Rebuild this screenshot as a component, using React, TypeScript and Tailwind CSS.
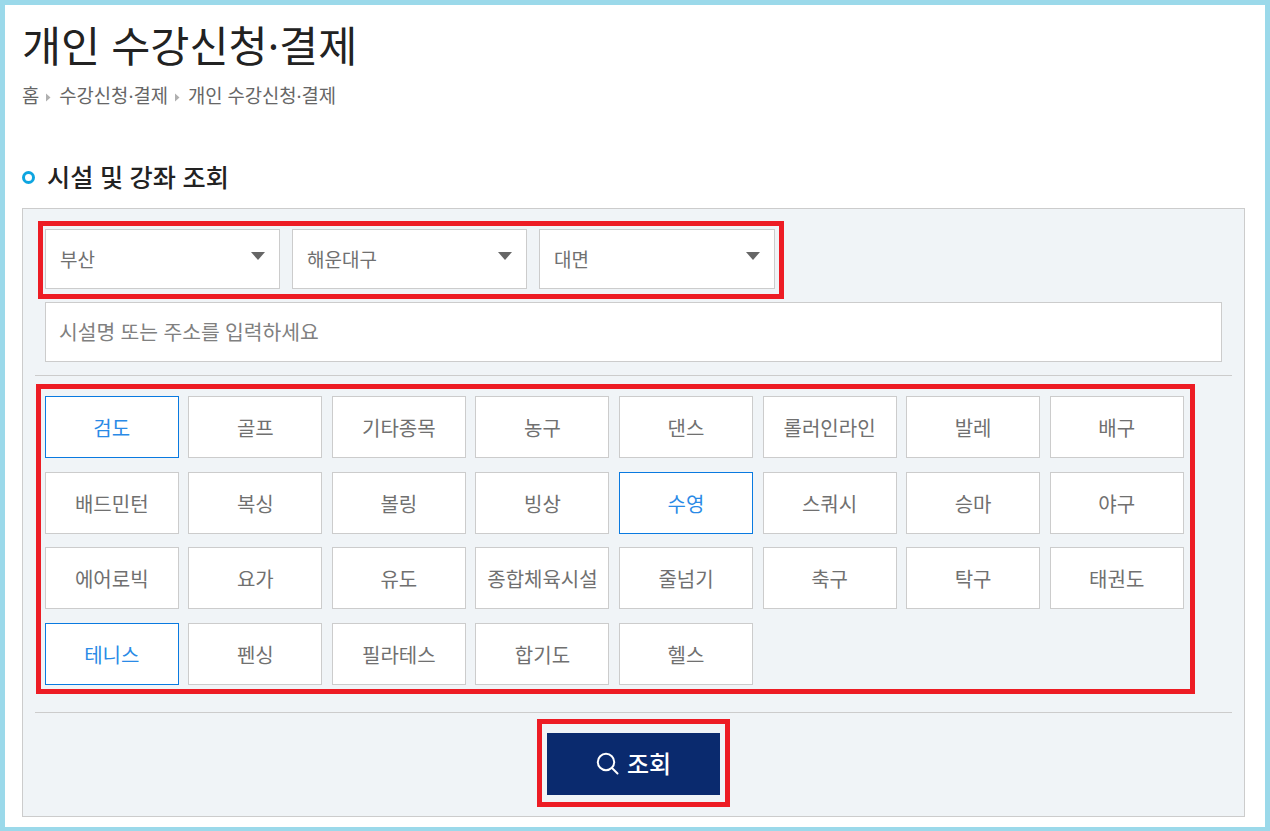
const SPORTS = [
  "검도", "골프", "기타종목", "농구", "댄스", "롤러인라인", "발레", "배구",
  "배드민턴", "복싱", "볼링", "빙상", "수영", "스쿼시", "승마", "야구",
  "에어로빅", "요가", "유도", "종합체육시설", "줄넘기", "축구", "탁구", "태권도",
  "테니스", "펜싱", "필라테스", "합기도", "헬스",
];
const ACTIVE = ["검도", "수영", "테니스"];

function Caret() {
  return (
    <svg width="6" height="9" viewBox="0 0 6 9" className="mt-[2px] mr-[8px] ml-[6px] shrink-0">
      <path d="M1 0.5L5.5 4.5L1 8.5z" fill="#b0b0b0" />
    </svg>
  );
}

function SelectBox({ label, width }: { label: string; width: string }) {
  return (
    <div className={`flex h-[60px] items-center justify-between border border-[#ccc] bg-white pl-[14px] pr-[14px] text-[19px] text-[#707070] ${width}`}>
      <span className="pt-[2px]">{label}</span>
      <svg width="14" height="8" viewBox="0 0 14 8" className="mb-[6px]">
        <path d="M0 0H14L7 8z" fill="#666" />
      </svg>
    </div>
  );
}

export default function App() {
  return (
    <div className="h-[831px] overflow-hidden border-x-[5px] border-t-[5px] border-b-4 border-[#9bd9ea] bg-white pl-[17px] pr-5 font-['Noto_Sans','Noto_Sans_CJK_KR',sans-serif]">
      <h1 className="mt-[11px] h-[60px] text-[42.5px] leading-[60px] font-normal text-[#222]">개인 수강신청·결제</h1>
      <nav className="mt-[8px] flex h-[24px] items-center text-[18.8px] leading-[24px] text-[#666]">
        <span>홈</span>
        <Caret />
        <span>수강신청·결제</span>
        <Caret />
        <span>개인 수강신청·결제</span>
      </nav>

      <h2 className="mt-[53px] flex h-[32px] items-center text-[25.2px] leading-[32px] font-medium text-[#222]">
        <span className="mr-[12px] h-[13px] w-[13px] rounded-full border-[3px] border-[#0ea5e0]" />
        시설 및 강좌 조회
      </h2>

      <section className="mt-[15px] h-[609px] border border-[#ccc] bg-[#f0f4f7] px-3 pt-5">
        <div className="relative ml-[10px] flex w-fit gap-3">
          <SelectBox label="부산" width="w-[235px]" />
          <SelectBox label="해운대구" width="w-[235px]" />
          <SelectBox label="대면" width="w-[236px]" />
          <div className="absolute -top-2 -right-[9px] -bottom-[10px] -left-[7px] border-[5px] border-[#ed1c24]" />
        </div>

        <div className="mt-[13px] ml-[10px] flex h-[60px] w-[1177px] items-center border border-[#ccc] bg-white px-[13px] text-[20.4px] text-[#808080]">
          시설명 또는 주소를 입력하세요
        </div>

        <div className="mt-[13px] h-px bg-[#ccc]" />

        <div className="relative mt-5 ml-[9.75px] grid w-[1139px] grid-cols-[repeat(8,134px)] grid-rows-[repeat(4,62px)] gap-x-[9.57px] gap-y-[13.67px]">
          {SPORTS.map((s) => (
            <div
              key={s}
              className={
                ACTIVE.includes(s)
                  ? "flex items-center justify-center border border-[#0a7ae0] bg-white pt-1 text-[20px] text-[#2a8ae6]"
                  : "flex items-center justify-center border border-[#ccc] bg-white pt-1 text-[20px] text-[#707070]"
              }
            >
              {s}
            </div>
          ))}
          <div className="absolute -top-3 -right-[11px] -bottom-[9px] -left-[9px] border-[5px] border-[#ed1c24]" />
        </div>

        <div className="mt-[27px] h-px bg-[#ccc]" />

        <div className="mt-5 flex justify-center">
          <button className="relative flex h-[62px] w-[173px] items-center justify-center gap-[8px] bg-[#0a2a6e] text-[24px] font-medium text-white">
            <svg width="23" height="23" viewBox="0 0 23 23" fill="none" stroke="currentColor" strokeWidth="2" strokeLinecap="round">
              <circle cx="10" cy="10" r="8.2" />
              <path d="M16 16L21.5 21.5" />
            </svg>
            조회
            <span className="absolute -top-[14px] -right-[10px] -bottom-3 -left-[10px] border-[5px] border-[#ed1c24]" />
          </button>
        </div>
      </section>
    </div>
  );
}
